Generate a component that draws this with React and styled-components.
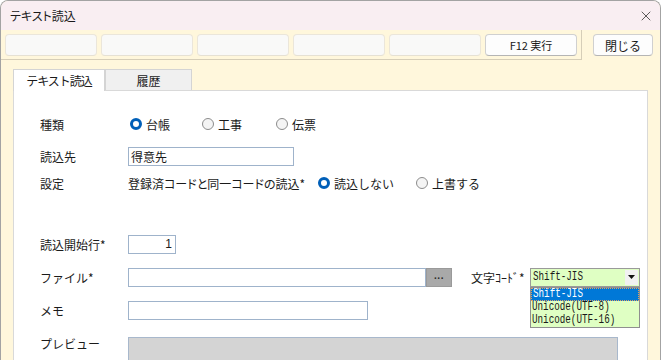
import React from 'react';
import styled, { createGlobalStyle } from 'styled-components';
import { X } from 'lucide-react';

const GlobalStyle = createGlobalStyle`
  html, body {
    margin: 0;
    padding: 0;
    background: #ffffff;
    overflow: hidden;
  }
  body {
    font-family: 'Noto Sans CJK JP', 'Noto Sans', sans-serif;
    font-size: 12px;
    color: #1a1a1a;
  }
`;

const Window = styled.div`
  width: 659px;
  height: 360px;
  border: 1px solid #a3a3a3;
  border-bottom: none;
  border-radius: 8px 8px 0 0;
  overflow: hidden;
  display: flex;
  flex-direction: column;
  background: #fff7dc;
`;

const TitleBar = styled.div`
  height: 29px;
  flex-shrink: 0;
  display: flex;
  align-items: center;
  justify-content: space-between;
  padding: 0 6px 0 9px;
  background: #f9eef2;
  font-size: 12px;
  font-feature-settings: 'palt';
`;

const Toolbar = styled.div`
  height: 30px;
  flex-shrink: 0;
  display: flex;
  align-items: flex-start;
`;

const ToolGroup = styled.div`
  width: 576px;
  height: 25px;
  padding: 4px 0 0 4px;
  display: flex;
  gap: 4px;
  border-right: 1px solid #d6ceb8;
  border-bottom: 1px solid #d6ceb8;
`;

const ToolButton = styled.button`
  width: ${(p) => p.$w || 92}px;
  height: 22px;
  margin: 0;
  padding: 0;
  font-family: inherit;
  font-size: ${(p) => (p.$big ? 12 : 11)}px;
  color: #1a1a1a;
  border-radius: 4px;
  background: ${(p) => (p.$active ? '#fdfdfd' : '#f9f9f8')};
  border: 1px solid ${(p) => (p.$active ? '#d0d0d0' : '#ebe6da')};
  border-bottom-color: ${(p) => (p.$active ? '#b5b5b5' : '#e6e1d4')};
`;

const CloseButton = styled(ToolButton)`
  margin: 4px 0 0 11px;
`;

const Body = styled.div`
  flex: 1;
  min-height: 0;
  display: flex;
  flex-direction: column;
  padding: 8px 12px 0 12px;
`;

const TabRow = styled.div`
  display: flex;
  align-items: flex-end;
  height: 22px;
  flex-shrink: 0;
`;

const Tab = styled.div`
  width: ${(p) => p.$w}px;
  height: ${(p) => (p.$active ? 22 : 21)}px;
  box-sizing: border-box;
  display: flex;
  align-items: center;
  justify-content: center;
  background: ${(p) => (p.$active ? '#ffffff' : '#f0f0f0')};
  border: 1px solid #d4d4d4;
  border-bottom: none;
  letter-spacing: ${(p) => (p.$active ? '-1px' : '0')};
  margin-bottom: ${(p) => (p.$active ? '-1px' : '0')};
  position: relative;
`;

const Panel = styled.div`
  flex: 1;
  min-height: 0;
  overflow: hidden;
  background: #ffffff;
  border: 1px solid #d9d9d9;
  border-bottom: none;
  padding: 23px 0 0 26px;
`;

const Row = styled.div`
  display: flex;
  align-items: ${(p) => (p.$top ? 'flex-start' : 'center')};
  height: ${(p) => (p.$top ? 'auto' : '20px')};
  margin-top: ${(p) => p.$gap || 0}px;
`;

const Label = styled.div`
  width: 88px;
  flex-shrink: 0;
  line-height: 13px;
`;

const RadioGroup = styled.div`
  display: flex;
  align-items: center;
  margin-left: 2px;
`;

const RadioItem = styled.label`
  display: flex;
  align-items: center;
  gap: 4px;
  width: ${(p) => (p.$w ? `${p.$w}px` : 'auto')};
`;

const RadioDot = styled.span`
  width: 12px;
  height: 12px;
  box-sizing: border-box;
  border-radius: 50%;
  border: ${(p) => (p.$on ? '3.5px solid #005fb8' : '1px solid #8c8c8c')};
  background: ${(p) => (p.$on ? '#ffffff' : '#f4f4f4')};
`;

const PlainText = styled.span`
  width: ${(p) => (p.$w ? `${p.$w}px` : 'auto')};
  font-feature-settings: 'palt';
  white-space: nowrap;
`;

const TextBox = styled.div`
  width: ${(p) => p.$w}px;
  height: 19px;
  box-sizing: border-box;
  border: 1px solid #9fb3cb;
  background: #ffffff;
  padding: 0 ${(p) => (p.$right ? 3 : 2)}px;
  display: flex;
  align-items: center;
  justify-content: ${(p) => (p.$right ? 'flex-end' : 'flex-start')};
  font-family: ${(p) => (p.$right ? "'Liberation Sans', sans-serif" : 'inherit')};
`;

const BrowseButton = styled.div`
  width: 26px;
  height: 19px;
  box-sizing: border-box;
  background: #a9a9a9;
  border: 1px solid #9a9a9a;
  display: flex;
  align-items: center;
  justify-content: center;
  font-family: 'Liberation Sans', sans-serif;
  font-size: 10px;
  font-weight: bold;
  letter-spacing: 0.5px;
  color: #2a2a2a;
  padding-bottom: 3px;
`;

const CodeLabel = styled.div`
  width: 59px;
  margin-left: 19px;
`;

const SelectWrap = styled.div`
  position: relative;
  width: 110px;
`;

const SelectBox = styled.div`
  height: 19px;
  box-sizing: border-box;
  border: 1px solid #9a9a9a;
  background: #dfffc3;
  display: flex;
  align-items: center;
  justify-content: space-between;
  padding: 0 1px 0 2px;
`;

const MonoText = styled.span`
  display: inline-block;
  font-family: 'Liberation Mono', 'DejaVu Sans Mono', monospace;
  font-size: 12.5px;
  line-height: 12px;
  white-space: nowrap;
  transform: scaleX(0.74);
  transform-origin: left center;
  width: 60px;
`;

const ArrowBox = styled.div`
  width: 13px;
  height: 15px;
  background: #f1f1f1;
  display: flex;
  align-items: center;
  justify-content: center;
`;

const DropList = styled.div`
  position: absolute;
  left: 0;
  top: 19px;
  width: 110px;
  box-sizing: border-box;
  border: 1px solid #8f8f8f;
  background: #dfffc3;
  z-index: 2;
`;

const DropItem = styled.div`
  height: 13px;
  display: flex;
  align-items: center;
  padding-left: 1px;
  box-sizing: border-box;
  background: ${(p) => (p.$sel ? '#0078d7' : 'transparent')};
  color: ${(p) => (p.$sel ? '#ffffff' : '#1a1a1a')};
  border: ${(p) => (p.$sel ? '1px dotted #e0a060' : 'none')};
`;

const Preview = styled.div`
  width: 490px;
  height: 40px;
  box-sizing: border-box;
  background: #d4d4d4;
  border: 1px solid #a8b8cc;
`;

const ToolBlank = () => <ToolButton />;

export default function App() {
  return (
    <>
      <GlobalStyle />
      <Window>
        <TitleBar>
          <span>テキスト読込</span>
          <X size={16} strokeWidth={1.2} color="#333" />
        </TitleBar>
        <Toolbar>
          <ToolGroup>
            <ToolBlank />
            <ToolBlank />
            <ToolBlank />
            <ToolBlank />
            <ToolBlank />
            <ToolButton $active>F12 実行</ToolButton>
          </ToolGroup>
          <CloseButton $active $big $w={60}>閉じる</CloseButton>
        </Toolbar>
        <Body>
          <TabRow>
            <Tab $active $w={92}>テキスト読込</Tab>
            <Tab $w={87}>履歴</Tab>
          </TabRow>
          <Panel>
            <Row>
              <Label>種類</Label>
              <RadioGroup>
                <RadioItem $w={72}>
                  <RadioDot $on />
                  台帳
                </RadioItem>
                <RadioItem $w={74}>
                  <RadioDot />
                  工事
                </RadioItem>
                <RadioItem>
                  <RadioDot />
                  伝票
                </RadioItem>
              </RadioGroup>
            </Row>
            <Row $gap={12}>
              <Label>読込先</Label>
              <TextBox $w={166}>得意先</TextBox>
            </Row>
            <Row $gap={7}>
              <Label>設定</Label>
              <PlainText $w={188}>登録済コードと同一コードの読込*</PlainText>
              <RadioGroup>
                <RadioItem $w={98}>
                  <RadioDot $on />
                  読込しない
                </RadioItem>
                <RadioItem>
                  <RadioDot />
                  上書する
                </RadioItem>
              </RadioGroup>
            </Row>
            <Row $gap={41}>
              <Label>読込開始行*</Label>
              <TextBox $w={48} $right>1</TextBox>
            </Row>
            <Row $gap={13}>
              <Label>ファイル*</Label>
              <TextBox $w={298} />
              <BrowseButton>...</BrowseButton>
              <CodeLabel>文字ｺｰﾄﾞ*</CodeLabel>
              <SelectWrap>
                <SelectBox>
                  <MonoText>Shift-JIS</MonoText>
                  <ArrowBox>
                    <svg width="7" height="4" viewBox="0 0 7 4">
                      <path d="M0 0 L7 0 L3.5 4 Z" fill="#111" />
                    </svg>
                  </ArrowBox>
                </SelectBox>
                <DropList>
                  <DropItem $sel>
                    <MonoText>Shift-JIS</MonoText>
                  </DropItem>
                  <DropItem>
                    <MonoText>Unicode(UTF-8)</MonoText>
                  </DropItem>
                  <DropItem>
                    <MonoText>Unicode(UTF-16)</MonoText>
                  </DropItem>
                </DropList>
              </SelectWrap>
            </Row>
            <Row $gap={13}>
              <Label>メモ</Label>
              <TextBox $w={240} />
            </Row>
            <Row $gap={17} $top>
              <Label>プレビュー</Label>
              <Preview />
            </Row>
          </Panel>
        </Body>
      </Window>
    </>
  );
}
